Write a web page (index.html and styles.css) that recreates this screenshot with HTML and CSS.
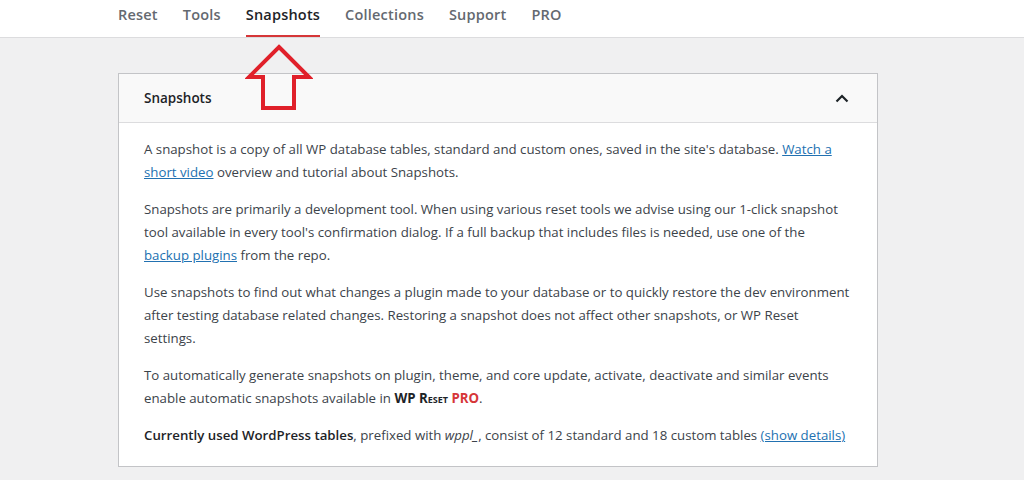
FILE: index.html
```html
<!DOCTYPE html>
<html lang="en">
<head>
<meta charset="utf-8">
<title>WP Reset - Snapshots</title>
<link rel="stylesheet" href="styles.css">
</head>
<body>
<nav class="tabs">
  <div class="tabs-inner">
    <a class="tab">Reset</a>
    <a class="tab">Tools</a>
    <a class="tab active">Snapshots</a>
    <a class="tab">Collections</a>
    <a class="tab">Support</a>
    <a class="tab">PRO</a>
  </div>
</nav>
<main class="content">
  <section class="card">
    <header class="card-head">
      <h2>Snapshots</h2>
      <svg class="chevron" width="14" height="9" viewBox="0 0 14 9"><path d="M1.5 7.5 L7 2 L12.5 7.5" fill="none" stroke="#1d2327" stroke-width="2.2"/></svg>
    </header>
    <div class="card-body">
      <p>A snapshot is a copy of all WP database tables, standard and custom ones, saved in the site's database. <a href="#">Watch a short video</a> overview and tutorial about Snapshots.</p>
      <p>Snapshots are primarily a development tool. When using various reset tools we advise using our 1-click snapshot tool available in every tool's confirmation dialog. If a full backup that includes files is needed, use one of the <a href="#">backup plugins</a> from the repo.</p>
      <p>Use snapshots to find out what changes a plugin made to your database or to quickly restore the dev environment after testing database related changes. Restoring a snapshot does not affect other snapshots, or WP Reset settings.</p>
      <p>To automatically generate snapshots on plugin, theme, and core update, activate, deactivate and similar events enable automatic snapshots available in <span class="brand">WP <span class="sc">Reset</span> <span class="pro">PRO</span></span>.</p>
      <p><b>Currently used WordPress tables</b>, prefixed with <i>wppl_</i>, consist of 12 standard and 18 custom tables <a href="#">(show details)</a></p>
    </div>
  </section>
  <svg class="arrow" width="68" height="72" viewBox="0 0 68 72"><path d="M34 4 L64 34 L49 34 L49 65 L18 65 L18 34 L4 34 Z" fill="none" stroke="#e0202a" stroke-width="4" stroke-linejoin="miter"/></svg>
</main>
</body>
</html>
```
FILE: styles.css
```css
* { box-sizing: border-box; }
html, body { margin: 0; padding: 0; }
body {
  background: #f0f0f1;
  font-family: "Open Sans", "Noto Sans", sans-serif;
  color: #3c434a;
  font-size: 13.25px;
}
.tabs {
  background: #fff;
  border-bottom: 1px solid #dcdcde;
  height: 38px;
}
.tabs-inner {
  display: flex;
  gap: 25px;
  padding-left: 118px;
  height: 100%;
}
.tab {
  font-size: 14.5px;
  font-weight: 600;
  color: #646970;
  line-height: 30px;
  letter-spacing: 0.2px;
  border-bottom: 2px solid transparent;
  height: 37px;
}
.tab.active {
  color: #1d2327;
  border-bottom-color: #d63638;
}
.content {
  position: relative;
  padding: 35px 0 0 118px;
}
.card {
  width: 760px;
  background: #fff;
  border: 1px solid #c3c4c7;
}
.card-head {
  display: flex;
  align-items: center;
  justify-content: space-between;
  height: 49px;
  padding: 0 28px 0 25px;
  background: #f9f9f9;
  border-bottom: 1px solid #dcdcde;
}
.card-head h2 {
  margin: 0;
  font-size: 13.5px;
  font-weight: 600;
  color: #1d2327;
}
.card-body {
  padding: 15px 25px 5px 25px;
}
.card-body p {
  margin: 0 0 14px;
  line-height: 23px;
}
.card-body a {
  color: #2271b1;
  text-decoration: underline;
}
.card-body b { color: #1d2327; font-weight: 600; }
.brand { font-weight: 700; color: #1d2327; }
.sc { font-variant: small-caps; }
.pro { color: #d63638; }
.arrow {
  position: absolute;
  left: 245px;
  top: 5px;
}
```
